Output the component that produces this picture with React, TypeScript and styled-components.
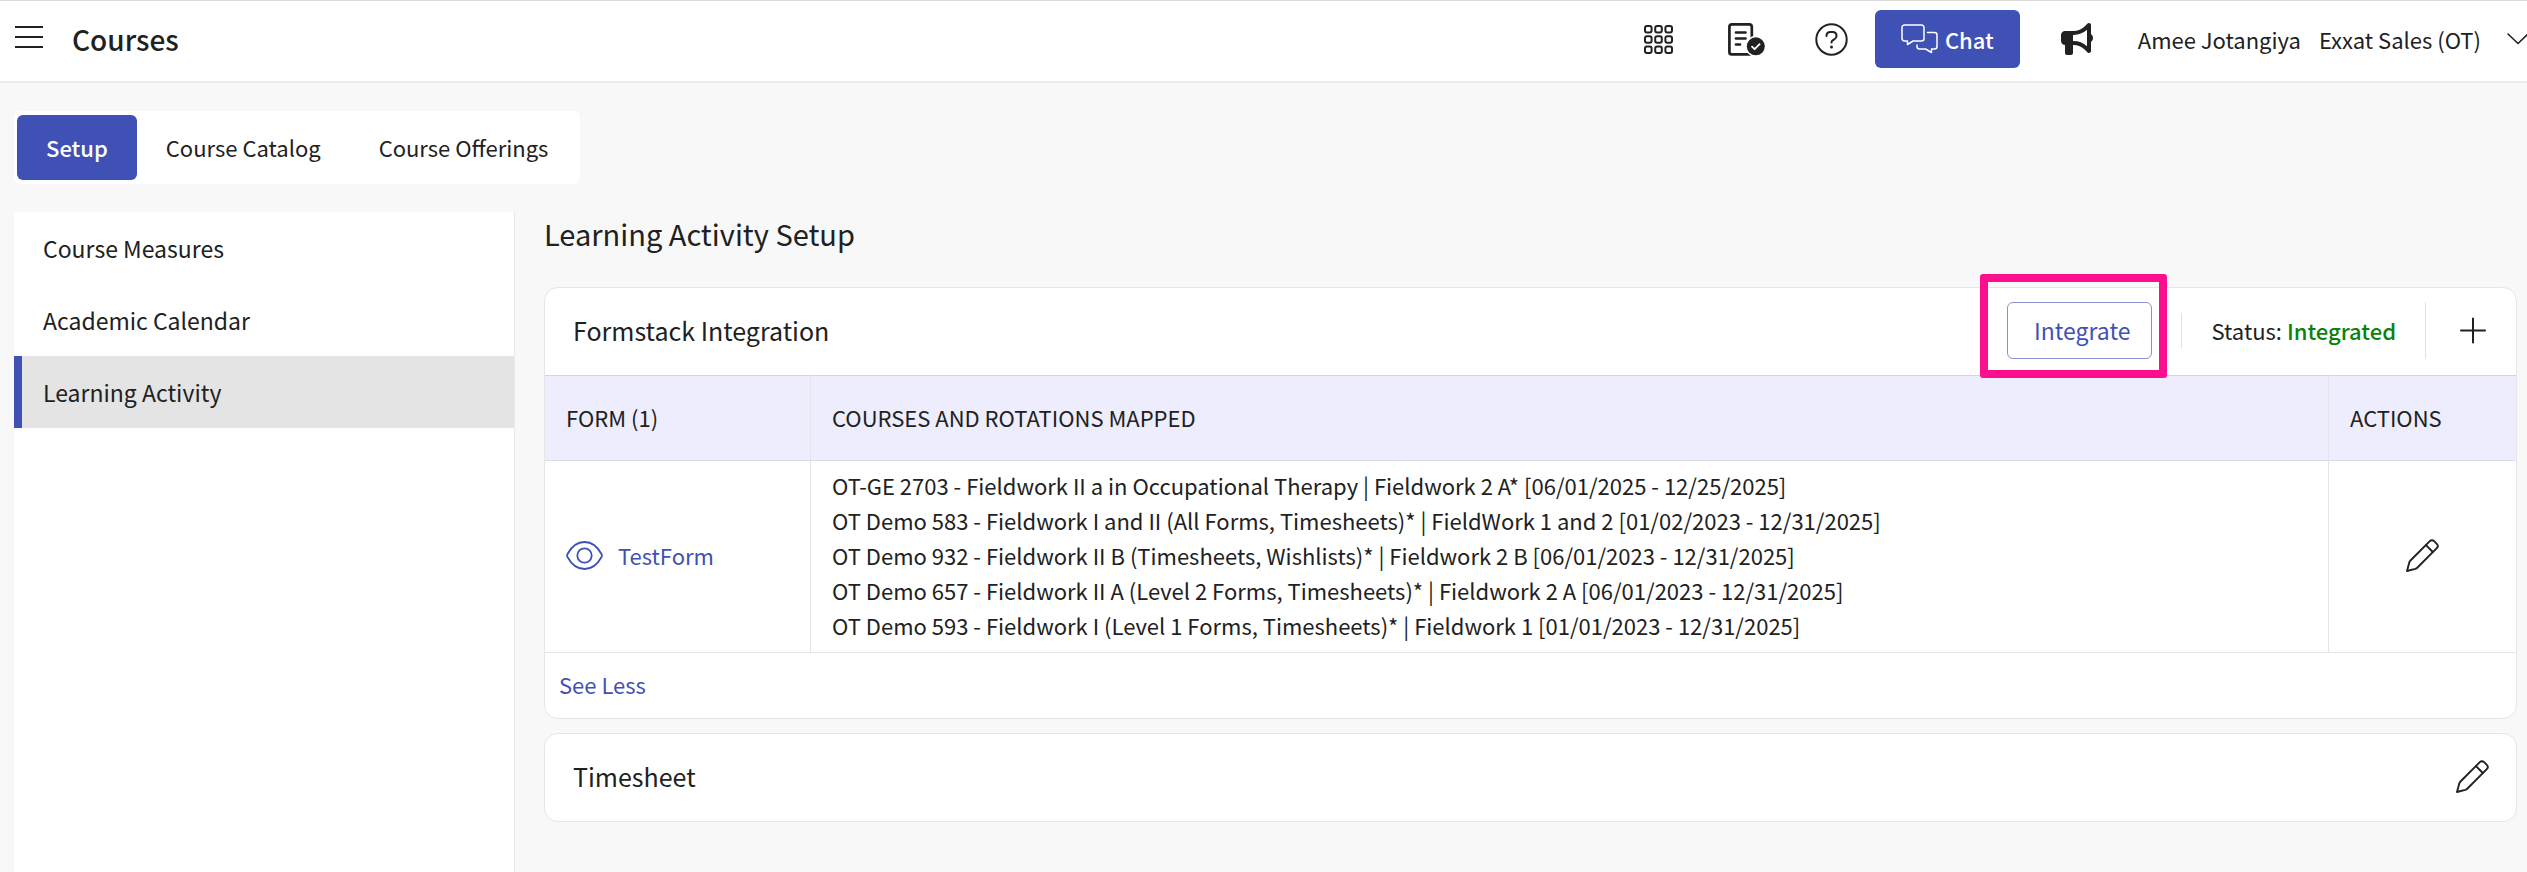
import React from "react";
import styled, { createGlobalStyle } from "styled-components";
import { FaBullhorn } from "react-icons/fa6";

const GlobalStyle = createGlobalStyle`
  * { box-sizing: border-box; }
  body {
    margin: 0;
    background: #f8f8f8;
    color: #212121;
    font-family: "Noto Sans CJK SC", "Noto Sans", sans-serif;
    font-size: 22px;
    line-height: 35px;
    overflow-x: hidden;
  }
  button { font: inherit; color: inherit; background: none; border: 0; padding: 0; margin: 0; cursor: pointer; }
  svg { display: block; flex: none; }
  a { color: #3f51b5; text-decoration: none; }
`;

const Page = styled.div`
  min-height: 100vh;
  display: flex;
  flex-direction: column;
`;

const TopBar = styled.header`
  display: flex;
  align-items: center;
  height: 83px;
  padding: 0 0 4px 15px;
  background: #fff;
  border-top: 1px solid #dcdcdc;
  border-bottom: 2px solid #ececec;
`;

const MenuButton = styled.button`
  && { padding-bottom: 4px; }
`;

const PageName = styled.h1`
  flex: 1;
  margin: 0 0 0 29px;
  font-size: 28px;
  line-height: 40px;
  font-weight: 500;
`;

const IconButton = styled.button<{ $gap: number }>`
  margin-right: ${(p) => p.$gap}px;
`;

const ChatButton = styled.button`
  display: flex;
  align-items: center;
  gap: 7px;
  height: 58px;
  margin-right: 41px;
  padding: 0 26px;
  border-radius: 6px;
  background: #3f51b5;
  color: #fff;
  font-weight: 500;
`;

const UserMenu = styled.button`
  display: flex;
  align-items: center;
  gap: 18px;
  white-space: nowrap;

  svg { margin-left: 8px; }
`;

const Tabs = styled.nav`
  display: flex;
  align-self: flex-start;
  margin: 28px 0 0 14px;
  padding: 4px 3px;
  border-radius: 6px;
  background: #fff;
`;

const Tab = styled.button<{ $active?: boolean }>`
  height: 65px;
  padding: 0 29px;
  border-radius: 6px;
  background: ${(p) => (p.$active ? "#3f51b5" : "transparent")};
  color: ${(p) => (p.$active ? "#fff" : "inherit")};
  font-weight: ${(p) => (p.$active ? 500 : 400)};
`;

const Body = styled.div`
  flex: 1;
  display: flex;
  align-items: stretch;
  margin-top: 28px;
  padding: 0 10px 0 14px;
`;

const SideNav = styled.nav`
  flex: none;
  width: 501px;
  background: #fff;
  border-right: 1px solid #e8e8e8;
`;

const SideLink = styled.a<{ $active?: boolean }>`
  display: flex;
  align-items: center;
  height: 72px;
  padding-left: 21px;
  border-left: 8px solid ${(p) => (p.$active ? "#3f51b5" : "transparent")};
  background: ${(p) => (p.$active ? "#e4e4e4" : "transparent")};
  color: #212121;
  font-size: 23px;
`;

const Content = styled.main`
  flex: 1;
  min-width: 0;
  padding-left: 29px;
`;

const Heading = styled.h2`
  margin: 0;
  padding: 1px 0 34px;
  font-size: 29px;
  line-height: 40px;
  font-weight: 400;
`;

const Card = styled.section`
  margin-bottom: 14px;
  border: 1px solid #e6e6e6;
  border-radius: 14px;
  background: #fff;
`;

const CardHeader = styled.div`
  display: flex;
  align-items: center;
  height: 87px;
  padding: 0 27px 2px 28px;
`;

const CardTitle = styled.h3`
  flex: 1;
  margin: 0;
  font-size: 25px;
  font-weight: 400;
`;

const Highlighted = styled.div`
  position: relative;

  &::after {
    content: "";
    position: absolute;
    inset: -28px -15px -19px -27px;
    border: 8px solid #fb0f8f;
    border-radius: 3px;
    pointer-events: none;
  }
`;

const OutlineButton = styled.button`
  height: 57px;
  padding: 0 20px 0 26px;
  border: 1px solid #8792d3;
  border-radius: 6px;
  color: #3f51b5;
  font-size: 23px;
`;

const Divider = styled.span<{ $height: number }>`
  width: 1px;
  height: ${(p) => p.$height}px;
  margin: 0 30px 0 29px;
  background: #e2e2e2;
`;

const Status = styled.span`
  strong { color: #0a820a; font-weight: 500; }
`;

const FormTable = styled.table`
  width: 100%;
  table-layout: fixed;
  border-collapse: separate;
  border-spacing: 0;

  th, td { text-align: left; border-bottom: 1px solid #e4e4e6; }
  th + th, td + td { border-left: 1px solid #e4e4e8; }

  th {
    height: 86px;
    padding: 0 21px 2px;
    background: #eeedfd;
    border-top: 1px solid #d4d4dc;
    border-bottom-color: #dcdbec;
    font-weight: 400;
  }

  td { padding: 7px 21px 9px; }
`;

const FormCol = styled.col` width: 265px; `;
const ActionsCol = styled.col` width: 188px; `;

const Mappings = styled.ul`
  margin: 0;
  padding: 0;
  list-style: none;
`;

const FormLink = styled.a`
  display: flex;
  align-items: center;
  gap: 15px;
`;

const EditButton = styled.button`
  display: block;
  margin: 0 auto;
`;

const CardFooter = styled.div`
  height: 65px;
  padding: 14px;

  button { color: #3f51b5; }
`;

const stroke = {
  fill: "none",
  stroke: "currentColor",
  strokeLinecap: "round" as const,
  strokeLinejoin: "round" as const,
};

const MenuIcon = () => (
  <svg width="28" height="24" viewBox="0 0 28 24" {...stroke} strokeWidth="2" strokeLinecap="butt">
    <path d="M0 2h28M0 12h28M0 22h28" />
  </svg>
);

const GridIcon = () => (
  <svg width="29" height="29" viewBox="0 0 29 29" {...stroke} strokeWidth="2">
    {[1, 11.2, 21.4].map((y) =>
      [1, 11.2, 21.4].map((x) => <rect key={`${x}-${y}`} x={x} y={y} width="6.6" height="6.6" rx="2" />)
    )}
  </svg>
);

const TaskIcon = () => (
  <svg width="37" height="33" viewBox="0 0 37 33" {...stroke} strokeWidth="2.7">
    <rect x="1.4" y="1.4" width="22.4" height="30" rx="2.5" />
    <path d="M8 9.5h9.5M8 15.5h9.5M8 21.5h4" />
    <circle cx="27.8" cy="23.3" r="10.5" fill="#fff" stroke="none" />
    <circle cx="27.8" cy="23.3" r="9" fill="currentColor" stroke="none" />
    <path d="M24 23.6l2.6 2.6 5-5" stroke="#fff" strokeWidth="1.8" />
  </svg>
);

const HelpIcon = () => (
  <svg width="33" height="33" viewBox="0 0 33 33" {...stroke} strokeWidth="2">
    <circle cx="16.5" cy="16.5" r="15.2" />
    <path d="M11.5 13c0-2.8 1.8-4 4-4h2c2.4 0 4 1.6 4 3.9 0 1.7-1 2.7-2.3 3.5l-1.5.9c-.8.5-1.2 1-1.2 2v.3" />
    <circle cx="16.5" cy="24" r="1.5" fill="currentColor" stroke="none" />
  </svg>
);

const ChatIcon = () => (
  <svg width="37" height="30" viewBox="0 0 37 30" {...stroke} strokeWidth="1.5">
    <path d="M3.5 1h17A2.5 2.5 0 0 1 23 3.5v11a2.5 2.5 0 0 1-2.5 2.5H12l-5.5 3.5V17h-3A2.5 2.5 0 0 1 1 14.5v-11A2.5 2.5 0 0 1 3.5 1z" />
    <path d="M26.5 8.500h7A2.5 2.5 0 0 1 36 11v11.5a2.5 2.5 0 0 1-2.5 2.5h-3v3.5L24.5 25h-6a2.5 2.5 0 0 1-2.5-2.5V21" />
  </svg>
);

const ChevronIcon = () => (
  <svg width="20" height="12" viewBox="0 0 20 12" {...stroke} strokeWidth="1.6">
    <path d="M1 1l10 9.5L21 1" />
  </svg>
);

const PlusIcon = () => (
  <svg width="33" height="33" viewBox="0 0 33 33" {...stroke} strokeWidth="2">
    <path d="M5 16.5h24M17 4.5v24" />
  </svg>
);

const PencilIcon = () => (
  <svg width="33" height="33" viewBox="0 0 33 33" {...stroke} strokeWidth="1.9">
    <path d="M1 32l2.2-8.3c.3-1 .6-1.5 1.3-2.2L23.8 2.2c1.3-1.3 3-1.3 4.3 0l2.7 2.7c1.3 1.3 1.3 3 0 4.3L11.5 28.5c-.7.7-1.2 1-2.2 1.3z" />
    <path d="M20 6.2l6.8 6.8" />
  </svg>
);

const EyeIcon = () => (
  <svg width="37" height="29" viewBox="0 0 37 29" {...stroke} strokeWidth="1.8">
    <path d="M1.5 13c3.500-6.500 9.500-12 17-12s13.500 5.500 17 12c.5 1 .5 2 0 3-3.500 6.500-9.500 12-17 12s-13.500-5.500-17-12c-.5-1-.5-2 0-3z" />
    <circle cx="18.5" cy="14.5" r="7.2" />
  </svg>
);

const tabs = ["Setup", "Course Catalog", "Course Offerings"];
const sections = ["Course Measures", "Academic Calendar", "Learning Activity"];
const mappings = [
  "OT-GE 2703 - Fieldwork II a in Occupational Therapy | Fieldwork 2 A* [06/01/2025 - 12/25/2025]",
  "OT Demo 583 - Fieldwork I and II (All Forms, Timesheets)* | FieldWork 1 and 2 [01/02/2023 - 12/31/2025]",
  "OT Demo 932 - Fieldwork II B (Timesheets, Wishlists)* | Fieldwork 2 B [06/01/2023 - 12/31/2025]",
  "OT Demo 657 - Fieldwork II A (Level 2 Forms, Timesheets)* | Fieldwork 2 A [06/01/2023 - 12/31/2025]",
  "OT Demo 593 - Fieldwork I (Level 1 Forms, Timesheets)* | Fieldwork 1 [01/01/2023 - 12/31/2025]",
];

export default function App() {
  return (
    <Page>
      <GlobalStyle />
      <TopBar>
        <MenuButton aria-label="Menu"><MenuIcon /></MenuButton>
        <PageName>Courses</PageName>
        <IconButton $gap={55} aria-label="Apps"><GridIcon /></IconButton>
        <IconButton $gap={50} aria-label="Tasks"><TaskIcon /></IconButton>
        <IconButton $gap={27} aria-label="Help"><HelpIcon /></IconButton>
        <ChatButton><ChatIcon />Chat</ChatButton>
        <IconButton $gap={45} aria-label="Announcements"><FaBullhorn size={32} /></IconButton>
        <UserMenu>
          <span>Amee Jotangiya</span>
          <span>Exxat Sales (OT)</span>
          <ChevronIcon />
        </UserMenu>
      </TopBar>
      <Tabs aria-label="Courses">
        {tabs.map((name, i) => (
          <Tab key={name} $active={i === 0}>{name}</Tab>
        ))}
      </Tabs>
      <Body>
        <SideNav aria-label="Setup">
          {sections.map((name, i) => (
            <SideLink key={name} href="#" $active={i === 2}>{name}</SideLink>
          ))}
        </SideNav>
        <Content>
          <Heading>Learning Activity Setup</Heading>
          <Card>
            <CardHeader>
              <CardTitle>Formstack Integration</CardTitle>
              <Highlighted>
                <OutlineButton>Integrate</OutlineButton>
              </Highlighted>
              <Divider $height={35} />
              <Status>Status: <strong>Integrated</strong></Status>
              <Divider $height={57} />
              <button aria-label="Add form"><PlusIcon /></button>
            </CardHeader>
            <FormTable>
              <colgroup>
                <FormCol />
                <col />
                <ActionsCol />
              </colgroup>
              <thead>
                <tr>
                  <th>FORM (1)</th>
                  <th>COURSES AND ROTATIONS MAPPED</th>
                  <th>ACTIONS</th>
                </tr>
              </thead>
              <tbody>
                <tr>
                  <td><FormLink href="#"><EyeIcon />TestForm</FormLink></td>
                  <td>
                    <Mappings>
                      {mappings.map((line) => <li key={line}>{line}</li>)}
                    </Mappings>
                  </td>
                  <td><EditButton aria-label="Edit TestForm"><PencilIcon /></EditButton></td>
                </tr>
              </tbody>
            </FormTable>
            <CardFooter><button>See Less</button></CardFooter>
          </Card>
          <Card>
            <CardHeader>
              <CardTitle>Timesheet</CardTitle>
              <button aria-label="Edit timesheet"><PencilIcon /></button>
            </CardHeader>
          </Card>
        </Content>
      </Body>
    </Page>
  );
}
